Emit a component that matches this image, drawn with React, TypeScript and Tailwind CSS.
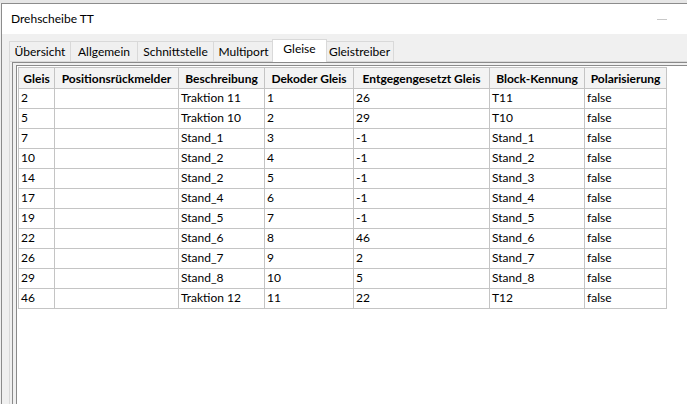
import React from 'react';

const columns = [
  { label: 'Gleis', w: 36 },
  { label: 'Positionsrückmelder', w: 124 },
  { label: 'Beschreibung', w: 86 },
  { label: 'Dekoder Gleis', w: 89 },
  { label: 'Entgegengesetzt Gleis', w: 136 },
  { label: 'Block-Kennung', w: 95 },
  { label: 'Polarisierung', w: 82 },
];

const rows = [
  ['2', '', 'Traktion 11', '1', '26', 'T11', 'false'],
  ['5', '', 'Traktion 10', '2', '29', 'T10', 'false'],
  ['7', '', 'Stand_1', '3', '-1', 'Stand_1', 'false'],
  ['10', '', 'Stand_2', '4', '-1', 'Stand_2', 'false'],
  ['14', '', 'Stand_2', '5', '-1', 'Stand_3', 'false'],
  ['17', '', 'Stand_4', '6', '-1', 'Stand_4', 'false'],
  ['19', '', 'Stand_5', '7', '-1', 'Stand_5', 'false'],
  ['22', '', 'Stand_6', '8', '46', 'Stand_6', 'false'],
  ['26', '', 'Stand_7', '9', '2', 'Stand_7', 'false'],
  ['29', '', 'Stand_8', '10', '5', 'Stand_8', 'false'],
  ['46', '', 'Traktion 12', '11', '22', 'T12', 'false'],
];

const tabs = [
  { label: 'Übersicht', w: 62 },
  { label: 'Allgemein', w: 68 },
  { label: 'Schnittstelle', w: 77 },
  { label: 'Multiport', w: 61 },
  { label: 'Gleise', w: 55, active: true },
  { label: 'Gleistreiber', w: 69 },
];

export default function App() {
  return (
    <div className="w-[687px] h-[404px] overflow-hidden bg-[#f0f0f0] text-[12px] text-black font-['Lato',sans-serif] flex flex-col">
      <div className="h-[3px] bg-[#e6e6e6] shrink-0" />
      <div className="flex-1 flex flex-col ml-[1px] border-l border-t border-[#8c8c8c] min-h-0">
        {/* title bar */}
        <div className="h-[30px] bg-white flex items-center justify-between pl-[9px] pr-[20px] shrink-0">
          <span className="leading-none">Drehscheibe TT</span>
          <span className="block w-[10px] h-px bg-[#c8c8c8]" />
        </div>

        {/* tabs */}
        <div className="flex items-end pl-[7px] pt-[4px] h-[27px] shrink-0">
          {tabs.map(t =>
            t.active ? (
              <div
                key={t.label}
                style={{ width: t.w }}
                className="h-[23px] bg-white border border-b-0 border-[#d9d9d9] flex items-center justify-center pb-[4px] relative top-px -ml-px -mr-[2px] z-10"
              >
                {t.label}
              </div>
            ) : (
              <div
                key={t.label}
                style={{ width: t.w }}
                className="h-[20px] border border-b-0 border-[#d9d9d9] -mr-px flex items-center justify-center leading-none"
              >
                {t.label}
              </div>
            )
          )}
        </div>

        {/* content panel */}
        <div className="flex-1 ml-[7px] border-l border-t border-[#d9d9d9] pl-[2px] min-h-0 flex">
          <div className="flex-1 border-l border-t border-[#8a8a8a] pl-[3px] pt-[2px] flex">
            <div className="flex-1 border-l border-t border-[#8a8a8a] bg-white pl-px pt-px">
              <table className="border-collapse table-fixed" style={{ width: 648 }}>
                <colgroup>
                  {columns.map(c => (
                    <col key={c.label} style={{ width: c.w }} />
                  ))}
                </colgroup>
                <thead>
                  <tr className="h-[21px] bg-[#f3f3f3]">
                    {columns.map(c => (
                      <th
                        key={c.label}
                        className="border border-[#c4c4c4] font-bold text-center px-px pt-px whitespace-nowrap overflow-hidden leading-none"
                      >
                        {c.label}
                      </th>
                    ))}
                  </tr>
                </thead>
                <tbody>
                  {rows.map((r, i) => (
                    <tr key={i} className="h-[20px]">
                      {r.map((v, j) => (
                        <td
                          key={j}
                          className="border border-[#c4c4c4] px-[2px] pb-px whitespace-nowrap overflow-hidden leading-none"
                        >
                          {v}
                        </td>
                      ))}
                    </tr>
                  ))}
                </tbody>
              </table>
            </div>
          </div>
        </div>
      </div>
    </div>
  );
}
